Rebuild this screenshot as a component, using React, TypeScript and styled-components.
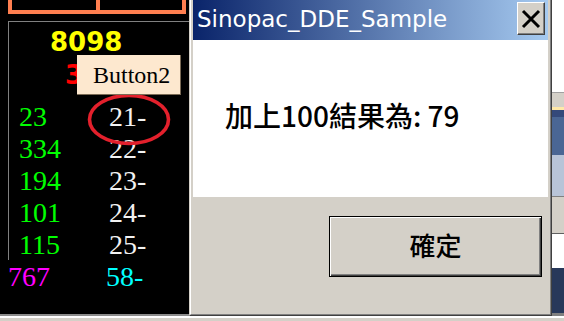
import React from "react";
import styled, { createGlobalStyle } from "styled-components";

const Global = createGlobalStyle`
  html, body { margin: 0; padding: 0; background: #ffffff; }
  #root { width: 564px; height: 321px; }
`;

const Screen = styled.div`
  position: relative;
  width: 564px;
  height: 321px;
  overflow: hidden;
  display: flex;
  flex-direction: column;
  background: #ffffff;
`;

const MainRow = styled.div`
  display: flex;
  height: 316px;
  flex: none;
`;

const BottomStrip = styled.div`
  height: 5px;
  flex: none;
  background: #d4d0c8;
  border-top: 2px solid #ffffff;
  box-sizing: border-box;
`;

/* ---------- left quote panel ---------- */

const LeftPanel = styled.div`
  position: relative;
  width: 189px;
  flex: none;
  background: #000000;
  border-bottom: 2px solid #8c8c8c;
  box-sizing: border-box;
  display: flex;
  flex-direction: column;
`;

const OrangeBox = styled.div`
  margin: -10px 0 0 8px;
  width: 178px;
  height: 24px;
  box-sizing: border-box;
  padding: 0 4px 4px 4px;
  background: #ff7f50;
  display: grid;
  grid-template-columns: 84px 82px;
  gap: 4px;
`;

const OrangeCell = styled.div`
  background: #000000;
`;

const QuoteBox = styled.div`
  margin: 7px 0 0 8px;
  height: 239px;
  border-top: 1px solid #808080;
  border-left: 1px solid #808080;
  box-sizing: border-box;
  display: flex;
  flex-direction: column;
`;

const BigNumber = styled.div<{ $color: string; $left: number; $top: number }>`
  font-family: "DejaVu Sans", sans-serif;
  font-weight: bold;
  font-size: 26px;
  line-height: 26px;
  height: 26px;
  color: ${(p) => p.$color};
  margin-top: ${(p) => p.$top}px;
  padding-left: ${(p) => p.$left}px;
  white-space: nowrap;
`;

const Rows = styled.div<{ $top: number; $left: number }>`
  margin-top: ${(p) => p.$top}px;
  padding-left: ${(p) => p.$left}px;
  display: flex;
  flex-direction: column;
`;

const Row = styled.div<{ $col: number }>`
  display: grid;
  grid-template-columns: ${(p) => p.$col}px auto;
  height: 32px;
  font-family: "Liberation Serif", "Times New Roman", serif;
  font-size: 28px;
  line-height: 32px;
`;

const Cell = styled.span<{ $color: string }>`
  color: ${(p) => p.$color};
  white-space: nowrap;
`;

const Tooltip = styled.div`
  position: absolute;
  left: 77px;
  top: 55px;
  width: 104px;
  height: 40px;
  box-sizing: border-box;
  background: #fde8cf;
  border-right: 1px solid #7a6a55;
  border-bottom: 1px solid #7a6a55;
  padding-left: 16px;
  font-family: "Liberation Serif", "Times New Roman", serif;
  font-size: 24px;
  line-height: 40px;
  color: #000000;
  z-index: 3;
`;

const Marker = styled.svg`
  position: absolute;
  left: 86px;
  top: 92px;
  width: 87px;
  height: 56px;
  z-index: 2;
`;

/* ---------- dialog ---------- */

const DialogOuter = styled.div`
  width: 363px;
  height: 316px;
  flex: none;
  box-sizing: border-box;
  background: #d4d0c8;
  border-left: 1px solid #d4d0c8;
  border-right: 1px solid #404040;
  border-bottom: 1px solid #404040;
  display: flex;
`;

const DialogInner = styled.div`
  flex: 1;
  box-sizing: border-box;
  border-left: 1px solid #ffffff;
  border-right: 1px solid #808080;
  border-bottom: 1px solid #808080;
  padding: 0 2px 2px 2px;
  display: flex;
  flex-direction: column;
`;

const TitleBar = styled.div`
  height: 40px;
  flex: none;
  display: flex;
  align-items: flex-start;
  justify-content: space-between;
  background: linear-gradient(to right, #0a246a, #a6caf0);
  padding: 0 3px 0 4px;
`;

const TitleText = styled.span`
  font-family: "DejaVu Sans", Tahoma, sans-serif;
  font-size: 23px;
  line-height: 38px;
  color: #ffffff;
  white-space: nowrap;
`;

const CloseButton = styled.div`
  margin-top: 2px;
  width: 28px;
  height: 33px;
  box-sizing: border-box;
  background: #d4d0c8;
  border-style: solid;
  border-width: 1px;
  border-color: #ffffff #404040 #404040 #ffffff;
  box-shadow: inset -1px -1px 0 #808080;
  display: flex;
  align-items: center;
  justify-content: center;
`;

const Client = styled.div`
  height: 157px;
  flex: none;
  background: #ffffff;
  box-sizing: border-box;
  padding: 61px 0 0 32px;
`;

const Message = styled.div`
  font-family: "Noto Sans CJK TC", "Noto Sans CJK SC", sans-serif;
  font-size: 28px;
  line-height: 28px;
  font-weight: 500;
  color: #000000;
  white-space: nowrap;
`;

const ButtonArea = styled.div`
  flex: 1;
  display: flex;
  justify-content: flex-end;
  align-items: flex-start;
  padding: 19px 6px 0 0;
`;

const OkButton = styled.div`
  width: 213px;
  height: 61px;
  box-sizing: border-box;
  border: 1px solid #000000;
  background: #d4d0c8;
  box-shadow: inset 1px 1px 0 #ffffff, inset -1px -1px 0 #404040,
    inset -2px -2px 0 #808080;
  display: flex;
  align-items: center;
  justify-content: center;
  padding-bottom: 4px;
  font-family: "Noto Sans CJK TC", "Noto Sans CJK SC", sans-serif;
  font-size: 26px;
  font-weight: 500;
  color: #000000;
`;

/* ---------- right background strip ---------- */

const RightStrip = styled.div`
  width: 12px;
  flex: none;
  display: flex;
  flex-direction: column;
`;

const Band = styled.div<{ $h: number; $bg: string }>`
  height: ${(p) => p.$h}px;
  flex: none;
  background: ${(p) => p.$bg};
`;

const bands: [number, string][] = [
  [92, "#ffffff"],
  [1, "#a0a0a0"],
  [14, "#d4d0c8"],
  [3, "#ffe8a8"],
  [7, "#34497a"],
  [38, "#4a6694"],
  [41, "#b8c4d8"],
  [1, "#808080"],
  [36, "#d4d0c8"],
  [1, "#606060"],
  [34, "#ffffff"],
  [45, "#28385a"],
  [3, "#808080"],
];

const greens = ["23", "334", "194", "101", "115"];
const whites = ["21-", "22-", "23-", "24-", "25-"];

export default function App() {
  return (
    <>
      <Global />
      <Screen>
        <MainRow>
          <LeftPanel>
            <OrangeBox>
              <OrangeCell />
              <OrangeCell />
            </OrangeBox>
            <QuoteBox>
              <BigNumber $color="#ffff00" $left={41} $top={7}>
                8098
              </BigNumber>
              <BigNumber $color="#ff0000" $left={56} $top={7}>
                3
              </BigNumber>
              <Rows $top={13} $left={10}>
                {greens.map((g, i) => (
                  <Row key={g + i} $col={90}>
                    <Cell $color="#00ff00">{g}</Cell>
                    <Cell $color="#f2f2f2">{whites[i]}</Cell>
                  </Row>
                ))}
              </Rows>
            </QuoteBox>
            <Rows $top={1} $left={8}>
              <Row $col={98}>
                <Cell $color="#ff00ff">767</Cell>
                <Cell $color="#00ffff">58-</Cell>
              </Row>
            </Rows>
            <Marker viewBox="0 0 87 56">
              <ellipse
                cx="43"
                cy="27.5"
                rx="39.5"
                ry="24"
                fill="none"
                stroke="#e3202c"
                strokeWidth="3.6"
              />
            </Marker>
            <Tooltip>Button2</Tooltip>
          </LeftPanel>

          <DialogOuter>
            <DialogInner>
              <TitleBar>
                <TitleText>Sinopac_DDE_Sample</TitleText>
                <CloseButton>
                  <svg width="20" height="20" viewBox="0 0 20 20">
                    <path
                      d="M2 2 L18 18 M18 2 L2 18"
                      stroke="#000000"
                      strokeWidth="3"
                      fill="none"
                    />
                  </svg>
                </CloseButton>
              </TitleBar>
              <Client>
                <Message>加上100結果為: 79</Message>
              </Client>
              <ButtonArea>
                <OkButton>確定</OkButton>
              </ButtonArea>
            </DialogInner>
          </DialogOuter>

          <RightStrip>
            {bands.map(([h, bg], i) => (
              <Band key={i} $h={h} $bg={bg} />
            ))}
          </RightStrip>
        </MainRow>
        <BottomStrip />
      </Screen>
    </>
  );
}
